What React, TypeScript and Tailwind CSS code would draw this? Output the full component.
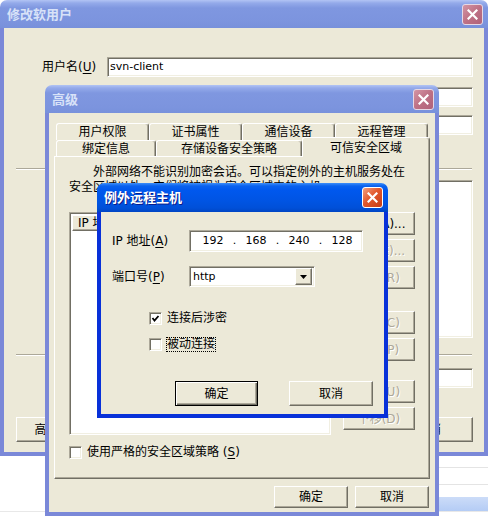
import React from 'react';

const raised =
  'flex items-center justify-center bg-[#ECE9D8] border border-t-white border-l-white border-r-[#716F64] border-b-[#716F64] shadow-[inset_-1px_-1px_0_#ACA899]';
const sunken =
  'bg-white border border-t-[#ACA899] border-l-[#ACA899] border-r-white border-b-white shadow-[inset_1px_1px_0_#716F64,inset_-1px_-1px_0_#F1EFE2]';
const etched = 'h-0 border-t border-b border-t-[#ACA899] border-b-white';
const tab =
  'flex items-center justify-center bg-[#ECE9D8] border-l border-t border-r border-l-white border-t-white border-r-[#716F64] rounded-t-[3px] shadow-[inset_-1px_0_0_#ACA899]';
const disabled = 'text-[#ACA899] [text-shadow:1px_1px_0_#ffffff]';

const Key: React.FC<{ c: string }> = ({ c }) => <span className="underline underline-offset-2">{c}</span>;

const CloseButton: React.FC<{ active?: boolean }> = ({ active }) => (
  <div
    className={`flex h-[21px] w-[21px] items-center justify-center rounded-[3px] border ${
      active
        ? 'border-white bg-[linear-gradient(135deg,#F3A080_0%,#E2582D_45%,#C53C16_100%)]'
        : 'border-[#E6D8E4] bg-[linear-gradient(135deg,#D395A4_0%,#BE7185_50%,#B0627A_100%)]'
    }`}
  >
    <svg width="11" height="11" viewBox="0 0 11 11">
      <path d="M1.5 1.5 L9.5 9.5 M9.5 1.5 L1.5 9.5" stroke="white" strokeWidth="2.2" strokeLinecap="square" />
    </svg>
  </div>
);

type WindowProps = {
  title: string;
  active?: boolean;
  className: string;
  titleHeight: string;
  children: React.ReactNode;
};

const XPWindow: React.FC<WindowProps> = ({ title, active, className, titleHeight, children }) => (
  <div className={`absolute flex flex-col ${className}`}>
    <div
      className={`flex shrink-0 items-center justify-between rounded-t-[7px] pl-[7px] pr-[5px] ${titleHeight} ${
        active
          ? 'bg-[linear-gradient(to_bottom,#3D8EF9_0px,#0A62EE_3px,#0058EE_7px,#0054E3_18px,#0050D8_25px,#0045C4_29px)]'
          : 'bg-[linear-gradient(to_bottom,#B2C4F4_0px,#94AAEA_3px,#7F97E0_8px,#7C94DE_22px,#7891DB_28px)]'
      }`}
    >
      <span
        className={`text-[13px] font-bold leading-none ${
          active ? 'text-white [text-shadow:1px_1px_0_#0A1C8A]' : 'text-[#D8E2F8]'
        }`}
      >
        {title}
      </span>
      <CloseButton active={active} />
    </div>
    <div
      className={`flex-1 border-x-4 border-b-4 bg-[#ECE9D8] text-[12px] leading-[14px] text-black ${
        active ? 'border-[#0831D9]' : 'border-[#7A88D8]'
      }`}
    >
      {children}
    </div>
  </div>
);

const Checkbox: React.FC<{ checked?: boolean }> = ({ checked }) => (
  <div className={`flex h-[13px] w-[13px] shrink-0 items-center justify-center ${sunken}`}>
    {checked && (
      <svg width="9" height="9" viewBox="0 0 9 9">
        <polyline points="1.5,4 3.5,6.5 7.5,2" fill="none" stroke="black" strokeWidth="1.8" />
      </svg>
    )}
  </div>
);

const App: React.FC = () => {
  const sideButtons = [
    { label: '添加(A)...', mt: 'mt-0', on: true },
    { label: '编辑(E)...', mt: 'mt-[4px]' },
    { label: '删除(R)', mt: 'mt-[4px]' },
    { label: '复制(C)', mt: 'mt-[22px]' },
    { label: '粘贴(P)', mt: 'mt-[4px]' },
    { label: '上移(U)', mt: 'mt-[19px]' },
    { label: '下移(D)', mt: 'mt-[4px]' },
  ];

  return (
    <div className="relative h-[516px] w-[488px] overflow-hidden bg-white [font-family:Tahoma,'DejaVu_Sans','Noto_Sans_CJK_SC',sans-serif]">
      {/* desktop behind */}
      <div className="flex flex-col pt-[467px]">
        <div className="ml-[439px] h-px bg-[#E4E4E4]" />
        <div className="h-[16px]" />
        <div className="ml-[439px] h-px bg-[#E4E4E4]" />
        <div className="ml-[439px] mt-[12px] h-[14px] bg-[linear-gradient(to_bottom,#CCDCF8,#B4CCF5)]" />
        <div className="h-px bg-[#E8E8E8]" />
      </div>

      {/* 修改软用户 */}
      <XPWindow title="修改软用户" className="left-0 top-0 h-[456px] w-[488px]" titleHeight="h-[28px]">
        <div className="flex flex-col pt-[29px]">
          <div className="flex items-center pl-[38px]">
            <span className="w-[65px]">
              用户名(<Key c="U" />)
            </span>
            <div className={`${sunken} flex h-[20px] w-[366px] items-center pl-[2px] text-[11px]`}>svn-client</div>
          </div>
          <div className={`${sunken} ml-[103px] mt-[10px] h-[20px] w-[366px]`} />
          <div className={`${sunken} ml-[103px] mt-[8px] h-[20px] w-[366px]`} />
          <div className={`${etched} mx-[12px] mt-[33px]`} />
          <div className={`${sunken} ml-[103px] mt-[10px] h-[158px] w-[366px]`} />
          <div className={`${etched} mx-[12px] mt-[16px]`} />
          <div className={`${sunken} ml-[103px] mt-[12px] h-[20px] w-[366px]`} />
          <div className="mt-[29px] flex justify-between pl-[12px] pr-[11px]">
            <div className={`${raised} h-[25px] w-[90px]`}>高级(V)...</div>
            <div className={`${raised} h-[25px] w-[88px]`}>取消</div>
          </div>
        </div>
      </XPWindow>

      {/* 高级 */}
      <XPWindow title="高级" className="left-[45px] top-[85px] h-[431px] w-[394px]" titleHeight="h-[28px]">
        <div className="flex flex-col pl-[5px] pt-[10px]">
          <div className="flex h-[17px] pl-[2px]">
            {['用户权限', '证书属性', '通信设备', '远程管理'].map((t) => (
              <div key={t} className={`${tab} h-[17px] w-[93px]`}>
                {t}
              </div>
            ))}
          </div>
          <div className="flex h-[16px] items-end pl-[2px]">
            <div className={`${tab} h-[16px] w-[100px]`}>绑定信息</div>
            <div className={`${tab} h-[16px] w-[146px]`}>存储设备安全策略</div>
            <div className={`${tab} relative top-[1px] z-10 h-[20px] w-[128px]`}>可信安全区域</div>
          </div>
          <div className="h-[323px] w-[376px] border border-t-white border-l-white border-r-[#716F64] border-b-[#716F64] shadow-[inset_-1px_-1px_0_#ACA899]">
            <div className="flex flex-col pl-[14px] pt-[8px]">
              <div className="whitespace-nowrap pl-[24px] leading-[15px]">外部网络不能识别加密会话。可以指定例外的主机服务处在</div>
              <div className="whitespace-nowrap leading-[15px]">安全区域以外，它们将被视为安全区域内的主机。</div>
              <div className="mt-[17px] flex gap-[12px]">
                <div className={`${sunken} h-[223px] w-[262px] p-[2px]`}>
                  <div className="flex h-[16px]">
                    <div className={`${raised} w-[110px] justify-start pl-[5px]`}>IP 地址</div>
                    <div className={`${raised} flex-1`} />
                  </div>
                </div>
                <div className="flex w-[72px] flex-col">
                  {sideButtons.map((b) => (
                    <div key={b.label} className={`${raised} ${b.mt} h-[23px] ${b.on ? '' : disabled}`}>
                      {b.label}
                    </div>
                  ))}
                </div>
              </div>
              <div className="mt-[10px] flex items-center">
                <Checkbox />
                <span className="ml-[5px]">
                  使用严格的安全区域策略 (<Key c="S" />)
                </span>
              </div>
            </div>
          </div>
          <div className="mt-[7px] flex w-[376px] justify-end gap-[7px] pr-[1px]">
            <div className={`${raised} h-[22px] w-[74px]`}>确定</div>
            <div className={`${raised} h-[22px] w-[74px]`}>取消</div>
          </div>
        </div>
      </XPWindow>

      {/* 例外远程主机 */}
      <XPWindow title="例外远程主机" active className="left-[97px] top-[183px] h-[235px] w-[291px]" titleHeight="h-[29px]">
        <div className="flex flex-col pt-[18px]">
          <div className="flex items-center pl-[11px]">
            <span className="w-[77px]">
              IP 地址(<Key c="A" />)
            </span>
            <div className={`${sunken} flex h-[22px] w-[174px] items-center pl-[4px] text-[11px]`}>
              {['192', '168', '240', '128'].map((o, i) => (
                <React.Fragment key={o}>
                  <span className="w-[38px] text-center">{o}</span>
                  {i < 3 && <span className="w-[5px] text-center">.</span>}
                </React.Fragment>
              ))}
            </div>
          </div>
          <div className="mt-[14px] flex items-center pl-[11px]">
            <span className="w-[77px]">
              端口号(<Key c="P" />)
            </span>
            <div className={`${sunken} flex h-[21px] w-[126px] items-center justify-between pl-[3px] pr-[2px] text-[11px]`}>
              <span>http</span>
              <div className={`${raised} h-[17px] w-[17px]`}>
                <svg width="7" height="4" viewBox="0 0 7 4">
                  <path d="M0 0 H7 L3.5 4 Z" fill="black" />
                </svg>
              </div>
            </div>
          </div>
          <div className="mt-[24px] flex items-center pl-[48px]">
            <Checkbox checked />
            <span className="ml-[5px]">连接后涉密</span>
          </div>
          <div className="mt-[12px] flex items-center pl-[48px]">
            <Checkbox />
            <span className="ml-[4px] border border-dotted border-black leading-[13px]">被动连接</span>
          </div>
          <div className="mt-[29px] flex gap-[31px] pl-[74px]">
            <div className="flex h-[25px] w-[83px] items-center justify-center border border-black bg-[#ECE9D8] shadow-[inset_1px_1px_0_#ffffff,inset_-1px_-1px_0_#716F64,inset_-2px_-2px_0_#ACA899]">
              确定
            </div>
            <div className={`${raised} h-[25px] w-[84px]`}>取消</div>
          </div>
        </div>
      </XPWindow>
    </div>
  );
};

export default App;
